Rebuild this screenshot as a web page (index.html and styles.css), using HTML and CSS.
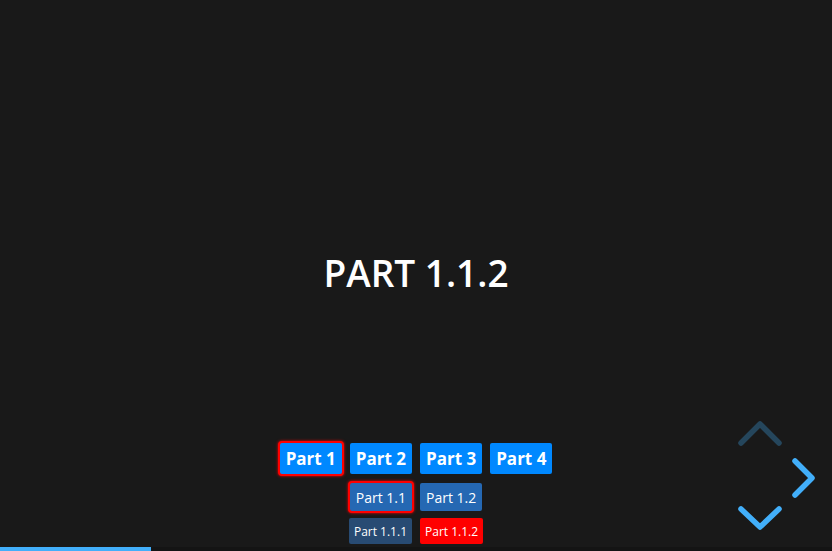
FILE: index.html
```html
<!DOCTYPE html>
<html>
<head>
<meta charset="utf-8">
<link rel="stylesheet" href="styles.css">
</head>
<body>
<div class="reveal">
  <section class="slide">
    <h2 class="title">PART 1.1.2</h2>
  </section>
  <nav class="menu">
    <div class="row row-1">
      <span class="btn active">Part 1</span>
      <span class="btn">Part 2</span>
      <span class="btn">Part 3</span>
      <span class="btn">Part 4</span>
    </div>
    <div class="row row-2">
      <span class="btn active">Part 1.1</span>
      <span class="btn">Part 1.2</span>
    </div>
    <div class="row row-3">
      <span class="btn">Part 1.1.1</span>
      <span class="btn current">Part 1.1.2</span>
    </div>
  </nav>
  <svg class="controls" viewBox="730 410 102 130" width="102" height="130">
    <path class="arrow disabled" d="M741 443 L760 424 L779 443"/>
    <path class="arrow" d="M795 461 L812 478 L795 495"/>
    <path class="arrow" d="M741 509 L760 527 L779 509"/>
  </svg>
  <div class="progress"><span class="progress-fill"></span></div>
</div>
</body>
</html>
```

FILE: styles.css
```css
html, body {
  margin: 0;
  padding: 0;
  height: 100%;
  background: #191919;
  overflow: hidden;
}

.reveal {
  position: relative;
  height: 100%;
  font-family: "Open Sans", "Noto Sans", sans-serif;
  color: #fff;
}

.slide {
  height: 100%;
  display: flex;
  align-items: center;
  justify-content: center;
  padding-bottom: 5px;
  box-sizing: border-box;
}

.title {
  margin: 0;
  font-size: 37px;
  font-weight: 600;
  line-height: 1.2;
  color: #fff;
}

.menu {
  position: absolute;
  left: 0;
  right: 0;
  bottom: 5px;
  display: flex;
  flex-direction: column;
  align-items: center;
}

.row {
  display: flex;
  gap: 4px;
}

.row-1 { margin-bottom: 5px; }
.row-2 { margin-bottom: 3px; }

.btn {
  display: flex;
  align-items: center;
  justify-content: center;
  border: 2px solid transparent;
  border-radius: 4px;
  color: #fff;
  box-sizing: border-box;
}

.row-1 .btn {
  height: 35px;
  padding: 0 6px 1px;
  font-size: 17px;
  font-weight: 700;
  background: #0088ff;
  background-clip: padding-box;
}

.row-2 .btn {
  height: 32px;
  padding: 0 6px;
  font-size: 14px;
  background: #2568b3;
  background-clip: padding-box;
}

.row-3 .btn {
  height: 30px;
  padding: 0 5px;
  font-size: 12px;
  background: #284b73;
  background-clip: padding-box;
}

.row .btn.active {
  border-color: #ff0000;
  box-shadow: 0 0 3px #ff0000;
  background-clip: border-box;
}

.row-3 .btn.current {
  background: #ff0000;
  background-clip: padding-box;
}

.controls {
  position: absolute;
  left: 730px;
  top: 410px;
}

.arrow {
  fill: none;
  stroke: #42affa;
  stroke-width: 5.5;
  stroke-linecap: round;
  stroke-linejoin: round;
}

.arrow.disabled {
  stroke-opacity: 0.3;
}

.progress {
  position: absolute;
  left: 0;
  right: 0;
  bottom: 0;
  height: 4px;
  background: rgba(0, 0, 0, 0.2);
}

.progress-fill {
  display: block;
  width: 151px;
  height: 100%;
  background: #42affa;
}
```
